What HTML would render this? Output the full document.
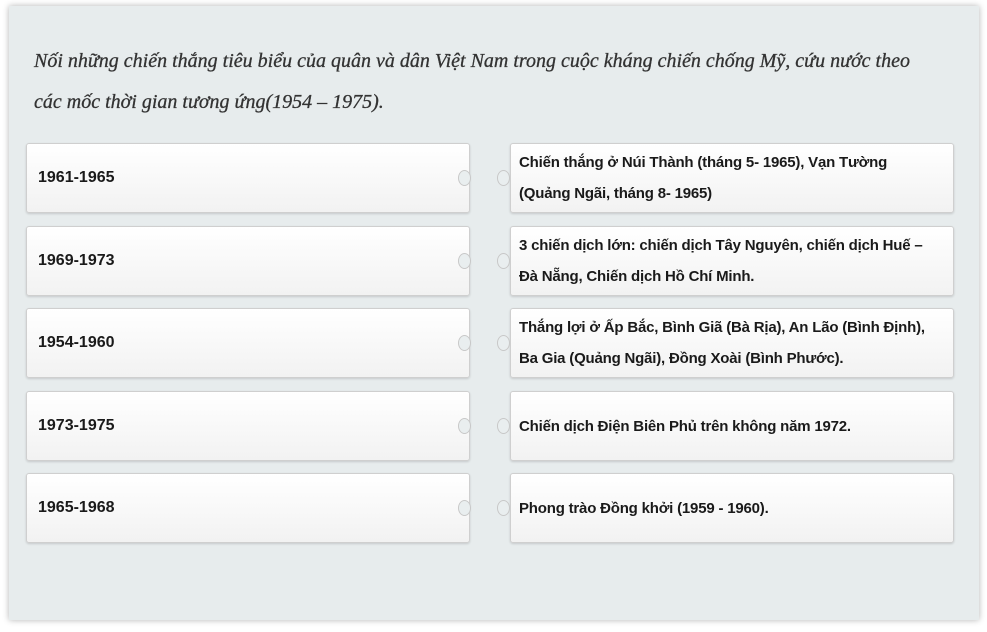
<!DOCTYPE html>
<html><head><meta charset="utf-8"><style>
body{margin:0;width:987px;height:632px;background:#fff;font-family:"Liberation Sans","DejaVu Sans",sans-serif;position:relative;overflow:hidden}
.panel{position:absolute;left:9px;top:6px;width:970px;height:614px;background:#e7eced;box-shadow:0 0 6px rgba(0,0,0,.3)}
.title{position:absolute;left:34px;top:41px;width:900px;font-family:"Liberation Serif","DejaVu Serif",serif;font-style:italic;font-size:20px;line-height:41px;color:#333;-webkit-text-stroke:.3px #333}
.box{position:absolute;height:70px;background:linear-gradient(#fff,#f2f2f2);border:1px solid #cfcfcf;border-radius:3px;box-shadow:0 1px 2px rgba(0,0,0,.15);font-size:16px;font-weight:bold;color:#1a1a1a;display:flex;align-items:center;box-sizing:border-box}
.l{left:26px;width:444px;padding-left:11px}
.r{left:510px;width:444px;padding-left:8px;padding-right:14px;line-height:31px;font-size:15px;letter-spacing:-.2px}
.n{position:absolute;width:11px;height:14px;border:1px solid #c8c8c8;border-radius:50%;background:#e9eeef}
</style></head><body>
<div class="panel"></div>
<div class="title">Nối những chiến thắng tiêu biểu của quân và dân Việt Nam trong cuộc kháng chiến chống Mỹ, cứu nước theo các mốc thời gian tương ứng(1954 – 1975).</div>

<div class="box l" style="top:143px">1961-1965</div>
<div class="box l" style="top:226px">1969-1973</div>
<div class="box l" style="top:308px">1954-1960</div>
<div class="box l" style="top:391px">1973-1975</div>
<div class="box l" style="top:473px">1965-1968</div>

<div class="box r" style="top:143px">Chiến thắng ở Núi Thành (tháng 5- 1965), Vạn Tường<br>(Quảng Ngãi, tháng 8- 1965)</div>
<div class="box r" style="top:226px">3 chiến dịch lớn: chiến dịch Tây Nguyên, chiến dịch Huế –<br>Đà Nẵng, Chiến dịch Hồ Chí Minh.</div>
<div class="box r" style="top:308px">Thắng lợi ở Ấp Bắc, Bình Giã (Bà Rịa), An Lão (Bình Định),<br>Ba Gia (Quảng Ngãi), Đồng Xoài (Bình Phước).</div>
<div class="box r" style="top:391px">Chiến dịch Điện Biên Phủ trên không năm 1972.</div>
<div class="box r" style="top:473px">Phong trào Đồng khởi (1959 - 1960).</div>

<div class="n" style="left:458px;top:170px"></div><div class="n" style="left:497px;top:170px"></div>
<div class="n" style="left:458px;top:253px"></div><div class="n" style="left:497px;top:253px"></div>
<div class="n" style="left:458px;top:335px"></div><div class="n" style="left:497px;top:335px"></div>
<div class="n" style="left:458px;top:418px"></div><div class="n" style="left:497px;top:418px"></div>
<div class="n" style="left:458px;top:500px"></div><div class="n" style="left:497px;top:500px"></div>
</body></html>
